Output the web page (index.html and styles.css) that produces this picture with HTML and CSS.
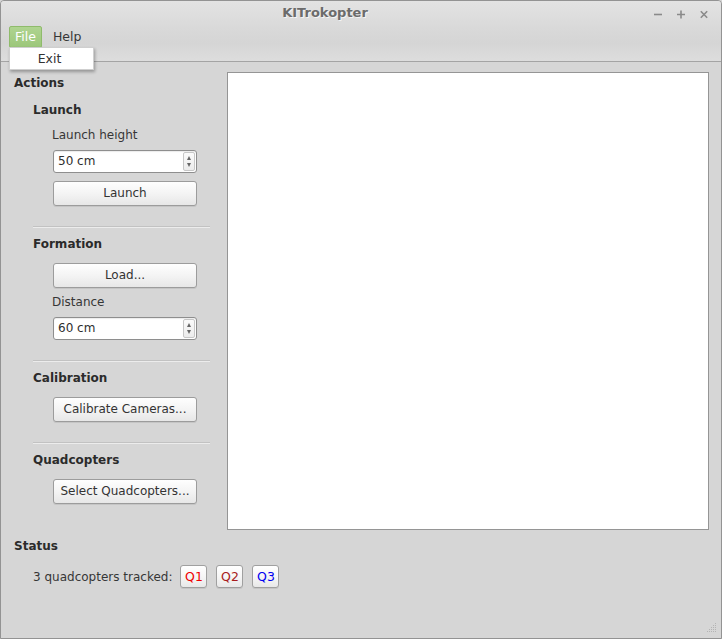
FILE: index.html
```html
<!DOCTYPE html>
<html>
<head>
<meta charset="utf-8">
<title>KITrokopter</title>
<link rel="stylesheet" href="styles.css">
</head>
<body>
<div class="window">
  <div class="header">
    <div class="titlebar">
      <div class="title">KITrokopter</div>
      <div class="wm-buttons">
        <svg class="wm" width="12" height="12" viewBox="0 0 12 12"><path d="M2 6.5H10" stroke="#8a8a8a" stroke-width="1.6"/></svg>
        <svg class="wm" width="12" height="12" viewBox="0 0 12 12"><path d="M2 6.5H10M6 2.5V10.5" stroke="#8a8a8a" stroke-width="1.6"/></svg>
        <svg class="wm" width="12" height="12" viewBox="0 0 12 12"><path d="M2.8 3.3L9.2 9.7M9.2 3.3L2.8 9.7" stroke="#8a8a8a" stroke-width="1.6"/></svg>
      </div>
    </div>
    <div class="menubar">
      <span class="menu-item active">File</span>
      <span class="menu-item">Help</span>
    </div>
  </div>

  <div class="body">
    <div class="main">
      <div class="sidebar">
        <div class="heading">Actions</div>

        <div class="group">
          <div class="subheading first">Launch</div>
          <div class="content">
            <div class="label">Launch height</div>
            <div class="spin">
              <span class="spin-text">50 cm</span>
              <span class="spin-btns"><span class="arr up"></span><span class="arr down"></span></span>
            </div>
            <div class="button mt8">Launch</div>
          </div>
          <div class="sep"></div>
        </div>

        <div class="group">
          <div class="subheading">Formation</div>
          <div class="content">
            <div class="button mt11">Load...</div>
            <div class="label mt6">Distance</div>
            <div class="spin">
              <span class="spin-text">60 cm</span>
              <span class="spin-btns"><span class="arr up"></span><span class="arr down"></span></span>
            </div>
          </div>
          <div class="sep"></div>
        </div>

        <div class="group">
          <div class="subheading">Calibration</div>
          <div class="content">
            <div class="button mt11">Calibrate Cameras...</div>
          </div>
          <div class="sep"></div>
        </div>

        <div class="group">
          <div class="subheading">Quadcopters</div>
          <div class="content">
            <div class="button mt11">Select Quadcopters...</div>
          </div>
        </div>
      </div>
      <div class="canvas"></div>
    </div>

    <div class="status">
      <div class="heading">Status</div>
      <div class="status-row">
        <span class="tracked">3 quadcopters tracked:</span>
        <span class="qbtn q1">Q1</span>
        <span class="qbtn q2">Q2</span>
        <span class="qbtn q3">Q3</span>
      </div>
    </div>
  </div>

  <div class="popup"><div class="popup-item">Exit</div></div>
  <div class="toolgrip"></div>
  <svg class="grip" width="12" height="12" viewBox="0 0 12 12">
    <g fill="#b4b4b4">
      <rect x="10" y="1" width="1" height="1"/>
      <rect x="8" y="3" width="1" height="1"/><rect x="10" y="3" width="1" height="1"/>
      <rect x="6" y="5" width="1" height="1"/><rect x="8" y="5" width="1" height="1"/><rect x="10" y="5" width="1" height="1"/>
      <rect x="4" y="7" width="1" height="1"/><rect x="6" y="7" width="1" height="1"/><rect x="8" y="7" width="1" height="1"/><rect x="10" y="7" width="1" height="1"/>
      <rect x="2" y="9" width="1" height="1"/><rect x="4" y="9" width="1" height="1"/><rect x="6" y="9" width="1" height="1"/><rect x="8" y="9" width="1" height="1"/><rect x="10" y="9" width="1" height="1"/>
    </g>
  </svg>
</div>
</body>
</html>
```

FILE: styles.css
```css
* { box-sizing: border-box; }

html, body {
  margin: 0;
  padding: 0;
  background: #d6d6d6;
}

body {
  font-family: "DejaVu Sans", "Liberation Sans", sans-serif;
  font-size: 12px;
  color: #363636;
  overflow: hidden;
}

.window {
  position: relative;
  width: 722px;
  height: 639px;
  border: 1px solid #939393;
  border-radius: 4px 4px 0 0;
  background: #d6d6d6;
  display: flex;
  flex-direction: column;
}

.header {
  height: 61px;
  border-bottom: 1px solid #a4a4a4;
  background: linear-gradient(to bottom, #e3e3e3 0%, #d9d9d9 45%, #d5d5d5 70%, #dddddd 100%);
  border-radius: 3px 3px 0 0;
  display: flex;
  flex-direction: column;
}

.titlebar {
  height: 24px;
  display: flex;
  align-items: center;
}

.title {
  flex: 1;
  text-align: center;
  font-size: 13px;
  font-weight: bold;
  color: #6b6b6b;
  text-shadow: 1px 1px 0 #f4f4f4;
  line-height: 24px;
  padding-right: 2px;
}

.wm-buttons {
  width: 70px;
  display: flex;
  gap: 11px;
  align-items: center;
  padding-left: 1px;
  padding-top: 2px;
}

.wm { display: block; }

.menubar {
  display: flex;
  gap: 5px;
  padding: 1px 0 0 8px;
}

.menu-item {
  display: block;
  height: 22px;
  line-height: 20px;
  padding: 0 5px;
  border: 1px solid transparent;
  border-radius: 2px;
  color: #363636;
  font-size: 12.5px;
}

.menu-item.active {
  background: linear-gradient(to bottom, #afd490, #9cc77a);
  border-color: #8fbb6b;
  color: #ffffff;
}

.body {
  flex: 1;
  display: flex;
  flex-direction: column;
  padding: 10px 12px 0 13px;
}

.main {
  display: flex;
  gap: 17px;
}

.sidebar {
  width: 196px;
  padding-top: 3px;
}

.heading {
  font-weight: bold;
  line-height: 16px;
  color: #2b2b2b;
}

.subheading {
  font-weight: bold;
  line-height: 16px;
  color: #2b2b2b;
  margin-left: 19px;
  margin-top: 8px;
}

.subheading.first { margin-top: 11px; }

.content {
  padding-left: 39px;
}

.label {
  line-height: 16px;
  margin-top: 9px;
  margin-left: -1px;
}

.mt6 { margin-top: 6px; }
.mt8 { margin-top: 8px; }
.mt11 { margin-top: 11px; }

.spin {
  margin-top: 7px;
  width: 144px;
  height: 23px;
  display: flex;
  background: #ffffff;
  border: 1px solid #8e8e8e;
  border-radius: 3px;
  box-shadow: inset 0 1px 1px rgba(0,0,0,0.08);
}

.spin-text {
  flex: 1;
  line-height: 21px;
  padding-left: 4px;
  color: #2e2e2e;
}

.spin-btns {
  width: 12px;
  margin: 1px 1px 1px 0;
  border: 1px solid #c7c7c7;
  border-radius: 2px;
  background: linear-gradient(to bottom, #fbfbfb, #ececec);
  display: flex;
  flex-direction: column;
  align-items: center;
  justify-content: space-between;
  padding: 3px 0 3px;
}

.arr {
  width: 0;
  height: 0;
  border-left: 2.5px solid transparent;
  border-right: 2.5px solid transparent;
}

.arr.up { border-bottom: 4px solid #666; }
.arr.down { border-top: 4px solid #666; }

.button {
  width: 144px;
  height: 25px;
  line-height: 23px;
  text-align: center;
  border: 1px solid #9c9c9c;
  border-radius: 3px;
  background: linear-gradient(to bottom, #fefefe 0%, #f4f4f4 50%, #e7e7e7 100%);
  box-shadow: 0 1px 0 rgba(0,0,0,0.08);
  color: #333333;
}

.sep {
  margin-top: 20px;
  margin-left: 19px;
  width: 177px;
  height: 2px;
  border-top: 1px solid #c2c2c2;
  border-bottom: 1px solid #ececec;
}

.canvas {
  width: 482px;
  height: 458px;
  background: #ffffff;
  border: 1px solid #959595;
}

.status {
  margin-top: 8px;
}

.status-row {
  margin-top: 11px;
  padding-left: 19px;
  display: flex;
  align-items: center;
}

.tracked {
  margin-right: 8px;
}

.qbtn {
  width: 27px;
  height: 23px;
  line-height: 21px;
  text-align: center;
  border: 1px solid #a0a0a0;
  border-radius: 3px;
  background: linear-gradient(to bottom, #ffffff 0%, #f6f6f6 50%, #e8e8e8 100%);
  box-shadow: 0 1px 0 rgba(0,0,0,0.08);
  margin-right: 9px;
  font-size: 12.5px;
}

.q1 { color: #f00000; }
.q2 { color: #a81c1c; }
.q3 { color: #0000f0; }

.popup {
  position: absolute;
  left: 8px;
  top: 46px;
  width: 85px;
  height: 23px;
  background: #ffffff;
  border: 1px solid #cfcfcf;
  box-shadow: 1px 2px 3px rgba(0,0,0,0.3);
}

.popup-item {
  line-height: 21px;
  text-align: center;
  font-size: 12.5px;
  color: #333;
  padding-right: 4px;
}

.toolgrip {
  position: absolute;
  left: 3px;
  top: 49px;
  width: 5px;
  height: 10px;
  background-image: radial-gradient(circle, #c4c4c4 0.5px, transparent 0.6px);
  background-size: 2px 2px;
}

.grip {
  position: absolute;
  right: 4px;
  bottom: 4px;
}
```
